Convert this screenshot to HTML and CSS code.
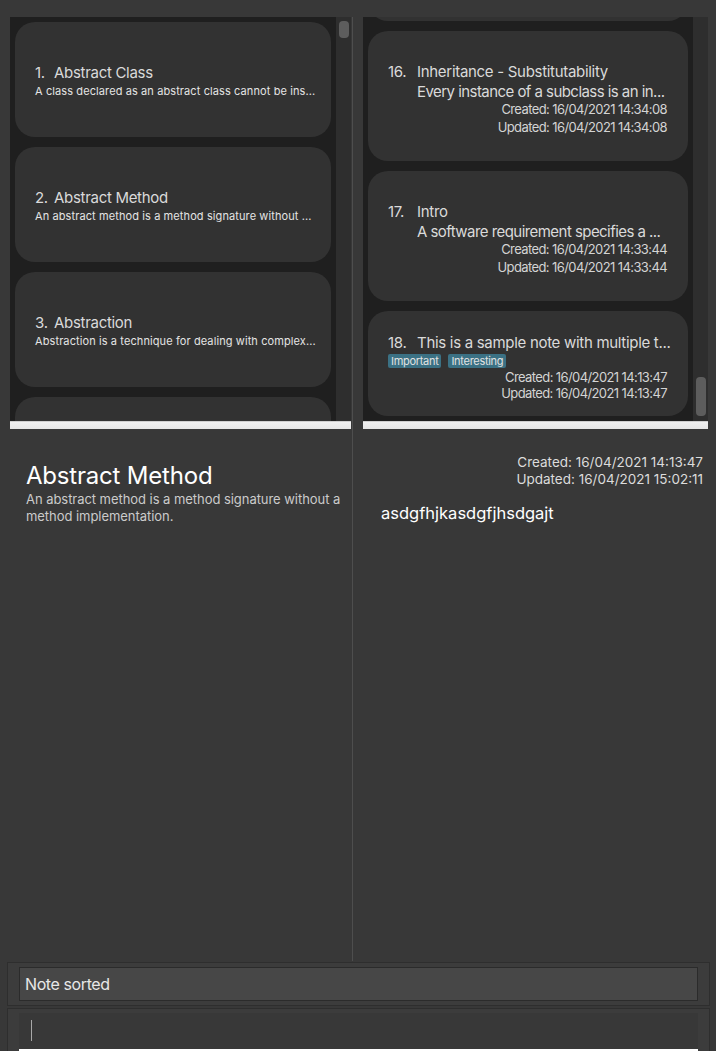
FILE: index.html
```html
<!DOCTYPE html>
<html>
<head>
<meta charset="utf-8">
<link rel="stylesheet" href="styles.css">
</head>
<body>
<div class="app">
  <div class="topbar"></div>
  <div class="main">
    <div class="pane pane-left">
      <div class="list-wrap">
        <div class="list-row">
          <div class="list list-top">
            <div class="card card-l">
              <div class="ltitle"><span class="lnum">1.</span>Abstract Class</div>
              <div class="ldesc">A class declared as an abstract class cannot be ins...</div>
            </div>
            <div class="card card-l">
              <div class="ltitle"><span class="lnum">2.</span>Abstract Method</div>
              <div class="ldesc">An abstract method is a method signature without ...</div>
            </div>
            <div class="card card-l">
              <div class="ltitle"><span class="lnum">3.</span>Abstraction</div>
              <div class="ldesc">Abstraction is a technique for dealing with complex...</div>
            </div>
            <div class="card card-l"></div>
          </div>
          <div class="track"><div class="thumb thumb-top"></div></div>
        </div>
        <div class="hbar"></div>
      </div>
      <div class="detail-left">
        <div class="d-title">Abstract Method</div>
        <div class="d-desc">An abstract method is a method signature without a method implementation.</div>
      </div>
    </div>
    <div class="divider"></div>
    <div class="pane pane-right">
      <div class="list-wrap">
        <div class="list-row">
          <div class="list list-bottom">
            <div class="card card-r"></div>
            <div class="card card-r">
              <div class="rtitle"><span class="rnum">16.</span>Inheritance - Substitutability</div>
              <div class="rdesc">Every instance of a subclass is an in...</div>
              <div class="rdate">Created: 16/04/2021 14:34:08</div>
              <div class="rdate">Updated: 16/04/2021 14:34:08</div>
            </div>
            <div class="card card-r">
              <div class="rtitle"><span class="rnum">17.</span>Intro</div>
              <div class="rdesc">A software requirement specifies a ...</div>
              <div class="rdate">Created: 16/04/2021 14:33:44</div>
              <div class="rdate">Updated: 16/04/2021 14:33:44</div>
            </div>
            <div class="card card-r card-short">
              <div class="rtitle"><span class="rnum">18.</span>This is a sample note with multiple t...</div>
              <div class="tags"><span class="tag">Important</span><span class="tag">Interesting</span></div>
              <div class="rdate rdate-tight">Created: 16/04/2021 14:13:47</div>
              <div class="rdate rdate-tight">Updated: 16/04/2021 14:13:47</div>
            </div>
          </div>
          <div class="track track-end"><div class="thumb thumb-bottom"></div></div>
        </div>
        <div class="hbar"></div>
      </div>
      <div class="detail-right">
        <div class="dr-date">Created: 16/04/2021 14:13:47</div>
        <div class="dr-date">Updated: 16/04/2021 15:02:11</div>
        <div class="dr-body">asdgfhjkasdgfjhsdgajt</div>
      </div>
    </div>
  </div>
  <div class="footer">
    <div class="result-box"><div class="result-inner">Note sorted</div></div>
    <div class="command-box"><div class="command-inner"><span class="caret"></span></div></div>
  </div>
</div>
</body>
</html>
```

FILE: styles.css
```css
* { box-sizing: border-box; }
html, body { margin: 0; padding: 0; }
body {
  background: #383838;
  font-family: "Inter", "Liberation Sans", sans-serif;
  width: 716px;
  height: 1051px;
  overflow: hidden;
}
.app { display: flex; flex-direction: column; height: 1051px; }
.topbar { height: 17px; flex: none; }
.main { display: flex; height: 944px; flex: none; }
.pane { display: flex; flex-direction: column; min-width: 0; }
.pane-left { width: 352px; flex: none; padding-left: 10px; padding-right: 1px; }
.pane-right { flex: 1; padding-left: 10px; padding-right: 8px; }
.divider { width: 1px; background: #4e4e4e; flex: none; }

.list-wrap { height: 412px; display: flex; flex-direction: column; flex: none; }
.list-row { height: 404px; display: flex; }
.list {
  flex: 1;
  min-width: 0;
  background: #1f1f1f;
  padding: 5px;
  display: flex;
  flex-direction: column;
  gap: 10px;
  overflow: hidden;
}
.list-top { justify-content: flex-start; }
.list-bottom { justify-content: flex-end; }
.track { width: 15px; background: #2e2e2e; flex: none; display: flex; flex-direction: column; align-items: center; }
.track-end { justify-content: flex-end; padding-bottom: 5px; }
.thumb { width: 10px; background: #5d5d5d; border-radius: 4px; }
.thumb-top { height: 17px; margin-top: 4px; }
.thumb-bottom { height: 39px; }
.hbar {
  height: 8px;
  background: linear-gradient(#cfcfcf 0, #cfcfcf 1px, #f0f0f0 1px, #e6e6e6 100%);
  flex: none;
}

.card {
  background: #323232;
  border-radius: 20px;
  flex: none;
  display: flex;
  flex-direction: column;
  justify-content: center;
}
.card-l { height: 115px; padding: 2px 20px 0; }
.card-r { height: 130px; padding: 6px 21px 0 20px; }
.card-short { height: 105px; padding-top: 7px; }

.ltitle { font-size: 15px; line-height: 20px; color: #dadada; letter-spacing: -0.3px; }
.lnum { display: inline-block; width: 19px; }
.ldesc { font-size: 11px; line-height: 16px; color: #e4e4e4; letter-spacing: 0.1px; margin-top: 0; white-space: nowrap; }

.rtitle { font-size: 15px; line-height: 20px; color: #dadada; letter-spacing: -0.3px; white-space: nowrap; }
.rnum { display: inline-block; width: 29px; }
.rdesc { font-size: 15px; line-height: 20px; color: #dadada; letter-spacing: -0.55px; padding-left: 29px; white-space: nowrap; margin-bottom: -2px; }
.rdate { font-size: 13px; line-height: 18px; color: #d4d4d4; text-align: right; letter-spacing: -0.6px; }
.rdate-tight { line-height: 16px; }
.tags { display: flex; gap: 7px; margin: 1px 0 1px; }
.tag {
  background: #3b7184;
  color: #e2e2e2;
  font-size: 11px;
  line-height: 14px;
  padding: 0 3px;
  border-radius: 2px;
  letter-spacing: -0.3px;
}

.detail-left { padding: 33px 0 0 16px; }
.d-title { font-size: 24px; line-height: 28px; color: #ffffff; letter-spacing: -0.2px; }
.d-desc { font-size: 13px; line-height: 17px; color: #cbcbcb; letter-spacing: -0.05px; margin-top: 1px; padding-right: 4px; }

.detail-right { padding: 25px 5px 0 18px; }
.dr-date { font-size: 13.5px; line-height: 17px; color: #dcdcdc; text-align: right; letter-spacing: 0; }
.dr-body { font-size: 16.5px; line-height: 20px; color: #ffffff; margin-top: 15px; letter-spacing: 0; }

.footer { padding: 0 6px 0 7px; display: flex; flex-direction: column; gap: 2px; }
.result-box {
  margin-top: 1px;
  height: 44px;
  background: #3c3c3c;
  border: 1px solid #2e2e2e;
  padding: 4px 11px 4px 11px;
  flex: none;
}
.result-inner {
  height: 34px;
  background: #474747;
  border: 1px solid #2b2b2b;
  color: #e8e8e8;
  font-size: 16px;
  line-height: 32px;
  padding-left: 5px;
  letter-spacing: -0.4px;
}
.command-box {
  height: 50px;
  background: #3c3c3c;
  border: 1px solid #2e2e2e;
  padding: 4px 11px 0 11px;
  flex: none;
}
.command-inner {
  height: 38px;
  background: #383838;
  border-bottom: 2px solid #ffffff;
  padding: 7px 0 0 12px;
}
.caret { display: block; width: 1px; height: 21px; background: #a8a8a8; }
```
